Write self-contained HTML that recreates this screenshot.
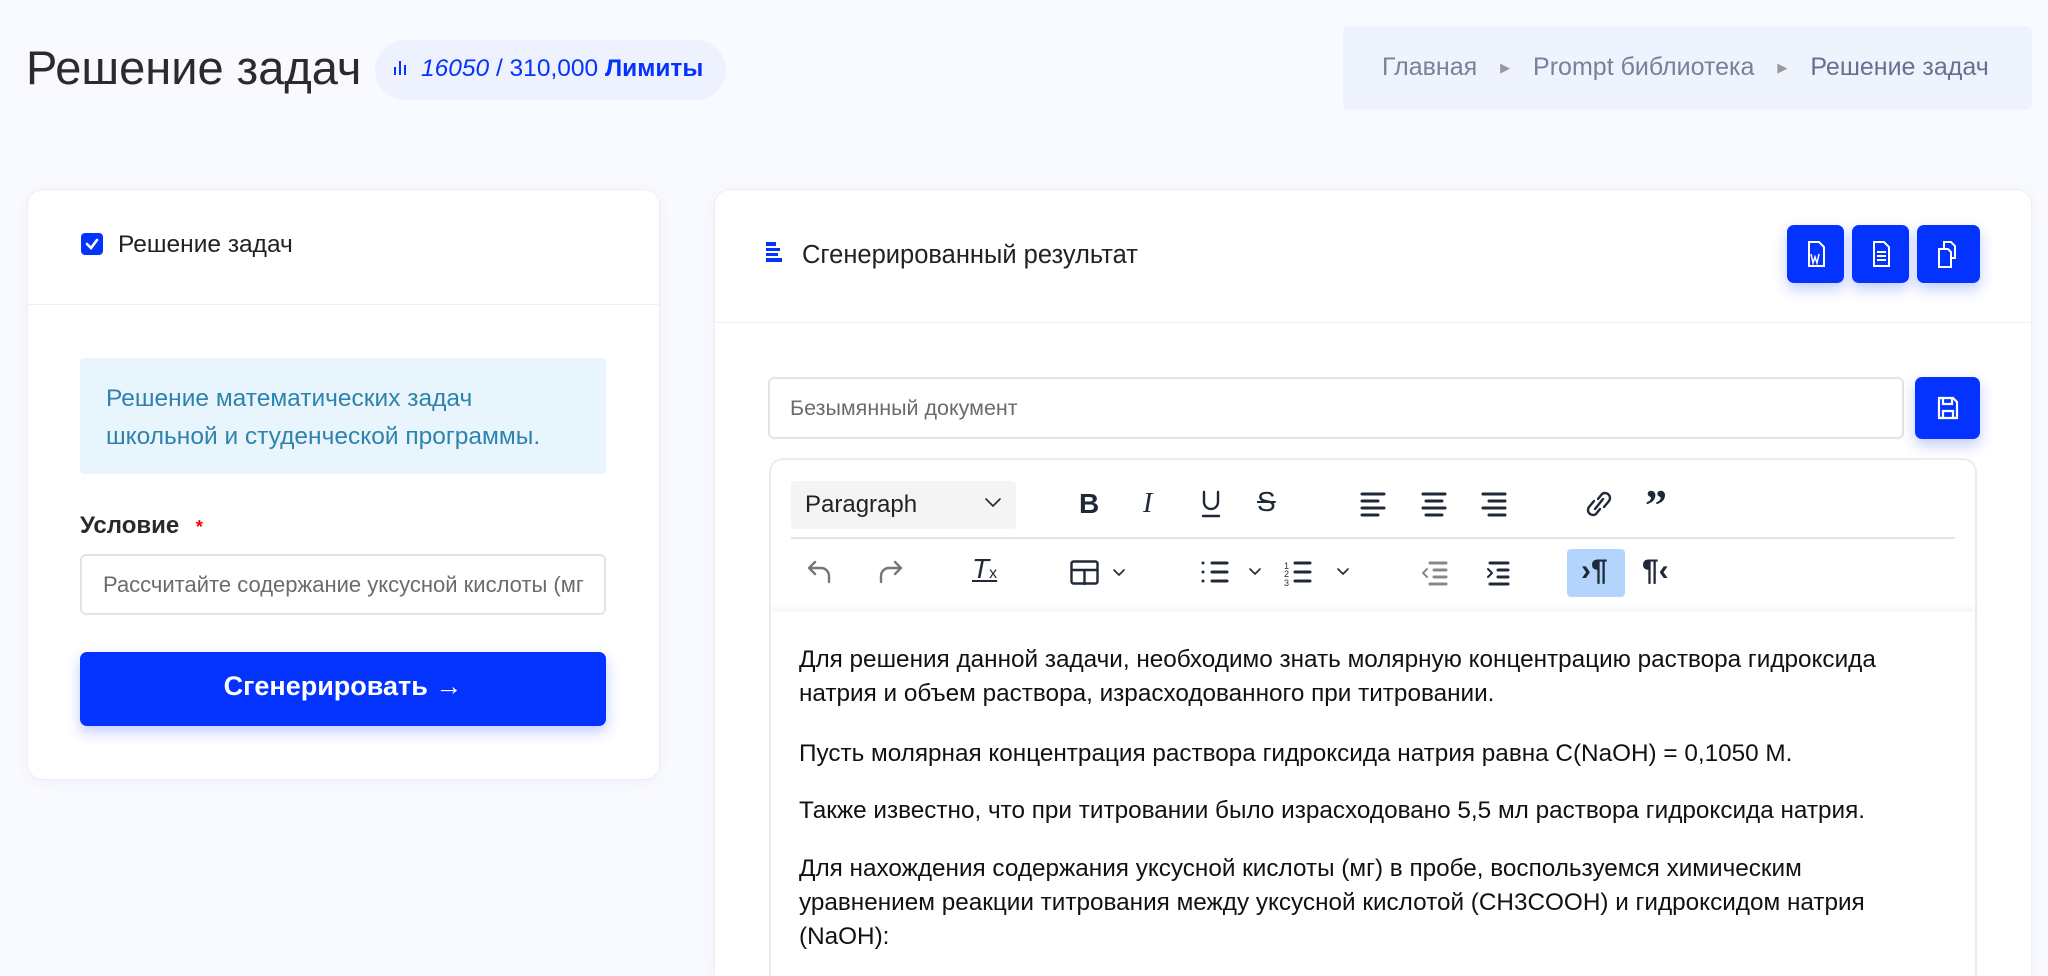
<!DOCTYPE html>
<html style="overflow:hidden;height:976px"><head><meta charset="utf-8"><style>
*{margin:0;padding:0;box-sizing:border-box}
body{width:2048px;height:976px;overflow:hidden;background:#f9faff;font-family:"Liberation Sans",sans-serif;color:#222;position:relative}
#w{position:absolute;left:0;top:0;width:2048px;height:976px;overflow:hidden}
.a{position:absolute}
.card{position:absolute;background:#fff;border:1px solid #eceef6;border-radius:16px;box-shadow:0 2px 14px rgba(60,70,140,.05)}
.btn{position:absolute;background:#0433ff;border-radius:7px;box-shadow:0 6px 14px rgba(4,51,255,.25)}
.ic{position:absolute;stroke:#1f2937;fill:none;stroke-width:2.4;stroke-linecap:round;stroke-linejoin:round}
.p{position:absolute;left:799px;font-size:24.3px;color:#111;white-space:nowrap;line-height:34px}
</style></head><body><div id="w">
<div class="a" style="left:26px;top:40px;font-size:47px;color:#2b2b2b">Решение задач</div>
<div class="a" style="left:375px;top:40px;width:351px;height:60px;border-radius:30px;background:#eef2ff;"></div>
<svg class="a" style="left:393px;top:59px" width="16" height="18"><rect x="1" y="8" width="2" height="8" fill="#0433ff"/><rect x="6" y="2" width="2" height="14" fill="#0433ff"/><rect x="11" y="6" width="2" height="10" fill="#0433ff"/></svg>
<div class="a" style="left:421px;top:55px;font-size:24.5px;color:#0433ff;white-space:nowrap"><i>16050</i> / 310,000 <b>Лимиты</b></div>
<div class="a" style="left:1343px;top:26px;width:689px;height:84px;background:#eff3fd;border-radius:6px"></div>
<div class="a" style="left:1382px;top:53px;font-size:25px;color:#7a7f9a;white-space:nowrap">Главная <span style="color:#999;font-size:13px;margin:0 16px;vertical-align:3px">▶</span> Prompt библиотека <span style="color:#999;font-size:13px;margin:0 16px;vertical-align:3px">▶</span> <span style="color:#6b6f8f">Решение задач</span></div>

<div class="card" style="left:27px;top:189px;width:633px;height:591px"></div>
<div class="a" style="left:27px;top:304px;width:633px;height:1px;background:#eef0f8"></div>
<div class="a" style="left:81px;top:233px;width:22px;height:22px;background:#0433ff;border-radius:4px"></div>
<svg class="a" style="left:81px;top:233px" width="22" height="22"><path d="M6 11l4 4 6-8" stroke="#fff" stroke-width="2.6" fill="none" stroke-linecap="round"/></svg>
<div class="a" style="left:118px;top:231px;font-size:24.5px;color:#222">Решение задач</div>
<div class="a" style="left:80px;top:358px;width:526px;height:116px;background:#e9f5fd;border-radius:4px"></div>
<div class="a" style="left:106px;top:380px;font-size:24.5px;color:#2e83ad;line-height:38px;white-space:nowrap">Решение математических задач<br>школьной и студенческой программы.</div>
<div class="a" style="left:80px;top:512px;font-size:24px;font-weight:bold;color:#2a2a2a">Условие <span style="color:#e00;font-size:18px;margin-left:10px">*</span></div>
<div class="a" style="left:80px;top:554px;width:526px;height:61px;border:2px solid #e3e3e3;border-radius:6px"></div>
<div class="a" style="left:103px;top:572px;font-size:22px;color:#6b6b6b;white-space:nowrap;width:500px;overflow:hidden">Рассчитайте содержание уксусной кислоты (мг</div>
<div class="btn" style="left:80px;top:652px;width:526px;height:74px"></div>
<div class="a" style="left:80px;top:671px;width:526px;text-align:center;font-size:27px;font-weight:bold;color:#fff">Сгенерировать →</div>

<div class="card" style="left:714px;top:189px;width:1318px;height:787px;border-bottom:none;border-radius:16px 16px 0 0"></div>
<div class="a" style="left:714px;top:322px;width:1318px;height:1px;background:#eef0f8"></div>
<svg class="a" style="left:766px;top:242px" width="16" height="22"><g fill="#0433ff"><rect y="0" width="10" height="4"/><rect y="6" width="14" height="3"/><rect y="11" width="12" height="3"/><rect y="16" width="16" height="4"/></g></svg>
<div class="a" style="left:802px;top:241px;font-size:25.5px;color:#222;white-space:nowrap">Сгенерированный результат</div>
<div class="btn" style="left:1787px;top:225px;width:57px;height:58px"></div>
<div class="btn" style="left:1852px;top:225px;width:57px;height:58px"></div>
<div class="btn" style="left:1917px;top:225px;width:63px;height:58px"></div>
<svg class="a" style="left:1787px;top:225px" width="193" height="58" fill="none" stroke="#fff" stroke-width="2"><path d="M22 17h10l5 5v19H22z"/><path d="M24 29l2 9 2-6 2 6 2-9" stroke-width="1.5"/><path d="M87 17h10l5 5v19H87z M90 27h9 M90 31h9 M90 35h9"/><path d="M152 24h9l3 3v15h-12z M157 24v-7h7l4 4v12h-4"/></svg>

<div class="a" style="left:768px;top:377px;width:1136px;height:62px;border:2px solid #e3e3e3;border-radius:6px"></div>
<div class="a" style="left:790px;top:396px;font-size:21.5px;color:#6b6b6b">Безымянный документ</div>
<div class="btn" style="left:1915px;top:377px;width:65px;height:62px"></div>
<svg class="a" style="left:1937px;top:396px" width="22" height="24" fill="none" stroke="#fff" stroke-width="2.2"><path d="M2 2h14l4 4v16H2z M6 2v6h9V2 M6 22v-7h10v7"/></svg>

<div class="a" style="left:769px;top:458px;width:1208px;height:518px;border:2px solid #ececec;border-bottom:none;border-radius:14px 14px 0 0;background:#fff"></div>
<div class="a" style="left:771px;top:612px;width:1204px;height:6px;box-shadow:0 -4px 8px rgba(0,0,0,.06)"></div>
<div class="a" style="left:791px;top:481px;width:225px;height:48px;background:#f4f4f5;border-radius:4px"></div>
<div class="a" style="left:805px;top:491px;font-size:24px;color:#222">Paragraph</div>
<svg class="ic" style="left:984px;top:497px;stroke-width:1.6" width="18" height="12"><path d="M2 2l7 7 7-7"/></svg>
<div class="a" style="left:791px;top:537px;width:1164px;height:2px;background:#e3e3e3"></div>
<div class="a" style="left:1079px;top:488px;font-size:28px;font-weight:bold;color:#1f2937">B</div>
<div class="a" style="left:1143px;top:488px;font-size:28px;font-style:italic;font-family:'Liberation Serif',serif;color:#1f2937">I</div>
<svg class="ic" style="left:1199px;top:489px" width="24" height="30"><path d="M5 3v10a7 7 0 0014 0V3 M4 27h16"/></svg>
<div class="a" style="left:1257px;top:486px;font-size:28px;text-decoration:line-through;color:#1f2937">S</div>
<svg class="ic" style="left:1360px;top:492px;stroke-width:3" width="160" height="26"><path d="M2 2h22 M2 9h16 M2 16h22 M2 23h16 M63 2h22 M66 9h16 M63 16h22 M66 23h16 M123 2h22 M129 9h16 M123 16h22 M129 23h16"/></svg>
<svg class="ic" style="left:1584px;top:487px" width="30" height="34"><path d="M14 12l4-5a5 5 0 017 7l-5 6 M16 22l-4 5a5 5 0 01-7-7l5-6 M11 22l8-10"/></svg>
<div class="a" style="left:1645px;top:480px;font-size:44px;font-weight:bold;color:#1f2937;font-family:'Liberation Serif',serif">”</div>
<svg class="ic" style="left:805px;top:556px;stroke:#777" width="100" height="32"><path d="M10 6l-6 6 6 6 M4 12h12a8 8 0 018 8v6 M90 6l6 6-6 6 M96 12H84a8 8 0 00-8 8v6"/></svg>
<div class="a" style="left:972px;top:553px;font-size:28px;font-style:italic;text-decoration:underline;color:#1f2937">T<span style="font-size:16px;font-style:normal;text-decoration:none">x</span></div>
<svg class="ic" style="left:1070px;top:560px" width="70" height="26"><rect x="1.5" y="1.5" width="26" height="22" rx="2"/><path d="M1.5 10h26 M14.5 10v14" /><path d="M44 10l5 5 5-5" stroke-width="1.6"/></svg>
<svg class="ic" style="left:1200px;top:560px;stroke-width:3" width="170" height="28"><path d="M3 3h0 M3 12h0 M3 21h0 M12 3h15 M12 12h15 M12 21h15 M95 3h15 M95 12h15 M95 21h15"/><path d="M50 9l5 5 5-5 M138 9l5 5 5-5" stroke-width="1.6"/><text x="84" y="9" font-size="9" fill="#1f2937" stroke="none">1</text><text x="84" y="17" font-size="9" fill="#1f2937" stroke="none">2</text><text x="84" y="26" font-size="9" fill="#1f2937" stroke="none">3</text></svg>
<svg class="ic" style="left:1420px;top:560px;stroke-width:3" width="100" height="28"><path d="M10 3h16 M14 10h12 M14 17h12 M10 24h16" stroke="#888"/><path d="M7 9l-4 4 4 4" stroke="#888" stroke-width="2"/><path d="M70 3h18 M78 10h10 M78 17h10 M70 24h18"/><path d="M68 9l4 4-4 4" stroke-width="2"/></svg>
<div class="a" style="left:1567px;top:549px;width:58px;height:48px;background:#b3d4fc;border-radius:4px"></div>
<div class="a" style="left:1581px;top:554px;font-size:30px;font-weight:bold;color:#1f2937">›¶</div>
<div class="a" style="left:1642px;top:554px;font-size:30px;font-weight:bold;color:#1f2937">¶‹</div>

<div class="p" style="top:643px">Для решения данной задачи, необходимо знать молярную концентрацию раствора гидроксида<br>натрия и объем раствора, израсходованного при титровании.</div>
<div class="p" style="top:737px">Пусть молярная концентрация раствора гидроксида натрия равна C(NaOH) = 0,1050 М.</div>
<div class="p" style="top:794px">Также известно, что при титровании было израсходовано 5,5 мл раствора гидроксида натрия.</div>
<div class="p" style="top:852px">Для нахождения содержания уксусной кислоты (мг) в пробе, воспользуемся химическим<br>уравнением реакции титрования между уксусной кислотой (CH3COOH) и гидроксидом натрия<br>(NaOH):</div>
</div></body></html>
